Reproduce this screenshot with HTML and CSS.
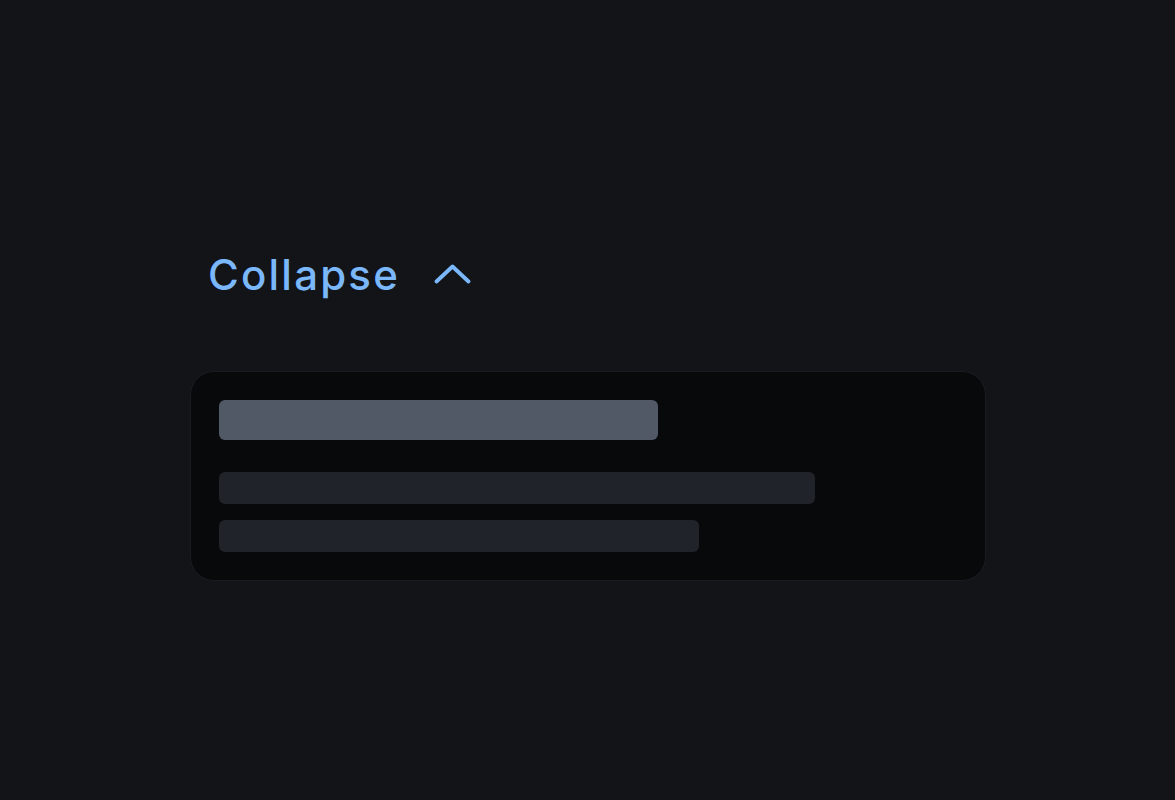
FILE: index.html
```html
<!DOCTYPE html>
<html>
<head>
<meta charset="utf-8">
<link rel="stylesheet" href="styles.css">
</head>
<body>
<main class="page">
  <button class="toggle">
    <span class="toggle-label">Collapse</span>
    <svg class="chevron" width="37" height="20" viewBox="0 0 37 20" fill="none">
      <path d="M2.5 17.5 L18.5 2.5 L34.5 17.5" stroke="currentColor" stroke-width="3.8" stroke-linecap="round" stroke-linejoin="round"/>
    </svg>
  </button>
  <section class="card">
    <div class="sk sk-title"></div>
    <div class="sk-lines">
      <div class="sk sk-line sk-line-1"></div>
      <div class="sk sk-line sk-line-2"></div>
    </div>
  </section>
</main>
</body>
</html>
```
FILE: styles.css
```css
html, body {
  margin: 0;
  padding: 0;
  background: #131418;
  height: 100%;
}
.page {
  padding: 251px 0 0 190px;
  display: flex;
  flex-direction: column;
  align-items: flex-start;
}
.toggle {
  display: flex;
  align-items: center;
  gap: 34px;
  background: none;
  border: 0;
  padding: 0 0 0 18px;
  margin: 0;
  color: #7ab8fb;
  font-family: "Inter", "Noto Sans", sans-serif;
  font-size: 42px;
  line-height: 48px;
  height: 48px;
  cursor: pointer;
}
.toggle-label {
  font-weight: 500;
  letter-spacing: 2.2px;
}
.chevron {
  display: block;
  margin-top: -2px;
}
.card {
  margin-top: 72px;
  box-sizing: border-box;
  width: 796px;
  padding: 28px;
  background: #08090b;
  border: 1px solid #1b1c21;
  border-radius: 24px;
  display: flex;
  flex-direction: column;
  gap: 32px;
}
.sk {
  border-radius: 6px;
}
.sk-title {
  width: 439px;
  height: 40px;
  background: #525966;
}
.sk-lines {
  display: flex;
  flex-direction: column;
  gap: 16px;
}
.sk-line {
  height: 32px;
  background: #202329;
}
.sk-line-1 { width: 596px; }
.sk-line-2 { width: 480px; }
```
